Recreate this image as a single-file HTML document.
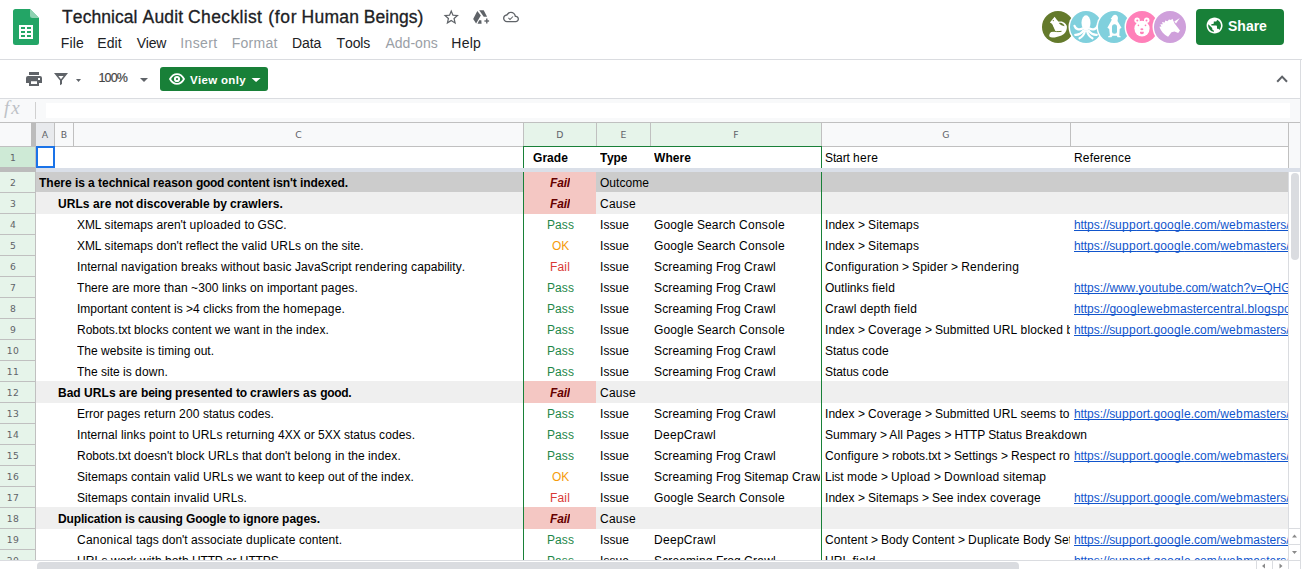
<!DOCTYPE html>
<html><head><meta charset="utf-8"><title>Technical Audit Checklist (for Human Beings)</title>
<style>
*{box-sizing:border-box;margin:0;padding:0}
html,body{width:1302px;height:569px;overflow:hidden;background:#fff;font-family:"Liberation Sans",Arial,sans-serif;color:#000;font-kerning:none}
#app{position:relative;width:1302px;height:569px;overflow:hidden}
.abs{position:absolute}
/* top bar */
#title{position:absolute;left:0;top:5px;-webkit-text-stroke:0.3px #202124;font-size:17.5px;line-height:24px;color:#202124;white-space:pre}
#title span{position:absolute;top:0}
#menu{position:absolute;left:0;top:33px;font-size:14px;line-height:20px;color:#202124;white-space:nowrap}
#menu span{position:absolute;top:0}
#menu .dis{color:#9aa0a6}
#tb-line{position:absolute;left:0;top:59px;width:1302px;height:1px;background:#dadce0}
#fxbar{position:absolute;left:0;top:98px;width:1300px;height:24px;background:#f8f9fa;border-top:1px solid #dadce0}
#fxbox{position:absolute;left:46px;top:103px;width:1244px;height:15px;background:#fff}
#fx{position:absolute;left:4px;top:96.500px;font-family:"Liberation Serif",serif;font-style:italic;font-size:19px;line-height:22px;color:#bdc1c6;letter-spacing:2px}
#fx-sep{position:absolute;left:35px;top:102px;width:1px;height:17px;background:#d0d0d0}
#rline{position:absolute;left:1300px;top:60px;width:1px;height:509px;background:#dadce0}
#zoom{position:absolute;left:98.500px;top:68.500px;font-size:12.500px;line-height:18px;color:#444;letter-spacing:-0.850px;-webkit-text-stroke:0.2px #444}
#viewonly{position:absolute;left:160px;top:67px;width:108px;height:24px;border-radius:3px;background:#188038;color:#fff;font-size:11.5px;font-weight:bold;line-height:24px;letter-spacing:0.32px}
#viewonly span{position:absolute;left:30px;top:0.5px;white-space:nowrap}
#share{position:absolute;left:1196px;top:9px;width:88px;height:36px;border-radius:4px;background:#188038;color:#fff;font-size:14px;font-weight:bold;line-height:36px}
#share span{position:absolute;left:32px;top:-1px}
/* grid */
#colhdr{position:absolute;left:0;top:122px;width:1300px;height:25px;background:#f8f9fa;border-top:1px solid #c0c0c0;border-bottom:1px solid #c0c0c0}
.ch{position:absolute;top:123px;height:23px;font-family:"DejaVu Sans","Liberation Sans",sans-serif;font-size:9.300px;letter-spacing:0.2px;line-height:24.400px;text-align:center;color:#5f6368;border-right:1px solid #c0c0c0}
.ch.sel{background:#e6f4ea}
.ch.act{background:#e8eaed}
.r{position:absolute;left:0;width:1288px;height:21px}
.r.l0:before{content:"";position:absolute;left:36px;top:0;width:1252px;height:20px;background:#ccc}
.r.l1:before{content:"";position:absolute;left:36px;top:-1px;width:1252px;height:22px;background:#efefef}
.rh{position:absolute;left:0;top:0;width:36px;height:21px;background:#e6f4ea;border-right:1px solid #c0c0c0;border-bottom:1px solid #c0c0c0;font-family:"DejaVu Sans","Liberation Sans",sans-serif;font-size:9.200px;letter-spacing:0.300px;line-height:22.600px;color:#5f6368;text-align:center;padding-right:9px;overflow:hidden}
.c{position:absolute;top:0;height:21px;font-size:12px;line-height:23px;white-space:pre;overflow:hidden;color:#000}
.c.b{font-weight:bold}
.fbg{position:absolute;left:524px;top:0;width:72px;height:21px;background:#f4c7c3}
.l1 .fbg{top:-1px;height:22px}
.l0 .fbg{height:20px}
.c.fb{color:#660000;font-weight:bold;font-style:italic}
.gpass{color:#1e8749}
.gok{color:#f59c0c}
.gfail{color:#d93a35}
.wh{left:654px;width:166px}
.st{left:825px;width:245px}
.rf{left:1074px;width:214px;color:#1155cc}
.rf u{text-decoration:underline;text-decoration-skip-ink:none}
#selL,#selR,#selT{position:absolute;background:#188038}
</style></head><body><div id="app">

<!-- logo -->
<svg class="abs" style="left:13px;top:9px" width="26" height="36" viewBox="0 0 26 36">
<path d="M2.5 0H17L26 9V33.5A2.5 2.5 0 0 1 23.5 36H2.5A2.5 2.5 0 0 1 0 33.500V2.5A2.5 2.5 0 0 1 2.5 0Z" fill="#23a566"/>
<path d="M17 0L26 9H19.500A2.5 2.5 0 0 1 17 6.500Z" fill="#8ed1b1"/>
<path d="M6 16H20V30H6ZM8 18V20H12V18ZM14 18V20H18V18ZM8 22V24H12V22ZM14 22V24H18V22ZM8 26V28H12V26ZM14 26V28H18V26Z" fill="#fff" fill-rule="evenodd"/>
</svg>
<div id="title"><span style="left:62.1px;letter-spacing:0.06px">Technical</span><span style="left:142.6px;letter-spacing:0.15px">Audit</span><span style="left:188.1px;letter-spacing:0.36px">Checklist</span><span style="left:268.3px;letter-spacing:0.68px">(for</span><span style="left:301.5px;letter-spacing:0.29px">Human</span><span style="left:363.7px;letter-spacing:0.07px">Beings)</span></div>
<div id="menu"><span style="left:60.8px;letter-spacing:0.13px">File</span><span style="left:97.3px;letter-spacing:0.08px">Edit</span><span style="left:136.7px;letter-spacing:-0.23px">View</span><span class="dis" style="left:180.2px;letter-spacing:0.41px">Insert</span><span class="dis" style="left:231.7px;letter-spacing:0.27px">Format</span><span style="left:292.1px;letter-spacing:-0.13px">Data</span><span style="left:336.5px;letter-spacing:-0.10px">Tools</span><span class="dis" style="left:385.4px;letter-spacing:0.04px">Add-ons</span><span style="left:451.3px;letter-spacing:0.24px">Help</span></div>


<div id="share"><span>Share</span></div>
<div id="viewonly"><span>View only</span></div>
<!-- title icons -->
<svg class="abs" style="left:441.8px;top:8px" width="18.5" height="18.5" viewBox="0 0 24 24"><path fill="#5f6368" d="M22 9.240l-7.190-.62L12 2 9.190 8.630 2 9.240l5.460 4.730L5.820 21 12 17.270 18.180 21l-1.630-7.030L22 9.240zM12 15.400l-3.760 2.270 1-4.280-3.320-2.880 4.380-.38L12 6.100l1.710 4.040 4.380.38-3.320 2.880 1 4.280L12 15.400z"/></svg>
<svg class="abs" style="left:470px;top:6px" width="22" height="22" viewBox="470 6 22 22"><g fill="#5f6368"><path d="M477.300 10.900L480.800 15.400L476.100 23.400L473.200 18.900Z"/><path d="M479.200 10.200H483.700L487.100 16.800H483.700Z"/><path d="M477.500 23.700L479.200 20.200H481.300L481.600 23.700Z"/><path d="M484.400 20.300H489.100V21.700H484.400Z"/><path d="M486.100 18.500H487.500V23.500H486.100Z"/></g></svg>
<svg class="abs" style="left:502.900px;top:8.900px" width="16" height="16" viewBox="0 0 24 24"><path fill="#5f6368" d="M19.350 10.040C18.670 6.590 15.640 4 12 4 9.110 4 6.600 5.640 5.350 8.040 2.340 8.360 0 10.910 0 14c0 3.310 2.690 6 6 6h13c2.760 0 5-2.240 5-5 0-2.640-2.050-4.780-4.650-4.960zM19 18H6c-2.210 0-4-1.790-4-4 0-2.050 1.530-3.760 3.560-3.970l1.070-.11.500-.95C8.080 7.140 9.940 6 12 6c2.620 0 4.880 1.860 5.390 4.430l.3 1.500 1.530.11c1.560.1 2.780 1.410 2.780 2.960 0 1.650-1.350 3-3 3zm-8.500-3.200l-1.900-1.900-1 1 2.900 2.900 5-5-1-1z"/></svg>
<!-- toolbar icons -->
<svg class="abs" style="left:20px;top:64px" width="140" height="30" viewBox="20 64 140 30"><g fill="#5f6368"><rect x="29" y="72" width="10" height="3"/><path d="M28 76H40A2 2 0 0 1 42 78V83H39V80H29V83H26V78A2 2 0 0 1 28 76ZM38 78V80H40V78Z" fill-rule="evenodd"/><path d="M29 80H39V86H29ZM31 81.200V84H37V81.200Z" fill-rule="evenodd"/><path d="M54 73H68L62 80.500V84L60 85.200V80.500ZM58.400 75.900L61 79.200L63.600 75.900Z" fill-rule="evenodd"/><path d="M76 79H81L78.500 82Z"/><path d="M140 78H148L144 82Z"/></g></svg>
<!-- eye + caret in view only -->
<svg class="abs" style="left:160px;top:67px" width="108" height="24" viewBox="160 67 108 24"><path d="M170 79C172 75.400 174.500 74.100 177 74.100C179.500 74.100 182 75.400 184 79C182 82.600 179.500 83.900 177 83.900C174.500 83.900 172 82.600 170 79Z" fill="none" stroke="#fff" stroke-width="1.800" stroke-linejoin="round"/><circle cx="177" cy="79" r="2.100" fill="none" stroke="#fff" stroke-width="2"/><path d="M251.600 78H260.600L256.100 82Z" fill="#fff"/></svg>
<!-- chevron -->
<svg class="abs" style="left:1274px;top:72px" width="16" height="14" viewBox="1274 72 16 14"><path d="M1277.200 81.800L1282.100 76.600L1287 81.800" fill="none" stroke="#5f6368" stroke-width="2"/></svg>
<!-- globe -->
<svg class="abs" style="left:1205.400px;top:16.400px" width="19.200" height="19.200" viewBox="0 0 24 24"><path fill="#fff" d="M12 2C6.480 2 2 6.480 2 12s4.480 10 10 10 10-4.480 10-10S17.520 2 12 2zm-1 17.930c-3.950-.49-7-3.850-7-7.930 0-.62.080-1.210.21-1.790L9 15v1c0 1.100.9 2 2 2v1.930zm6.900-2.540c-.26-.81-1-1.390-1.900-1.390h-1v-3c0-.55-.45-1-1-1H8v-2h2c.55 0 1-.45 1-1V7h2c1.100 0 2-.9 2-2v-.41c2.930 1.190 5 4.060 5 7.410 0 2.080-.8 3.970-2.100 5.390z"/></svg>
<!-- avatars -->
<svg class="abs" style="left:1040px;top:9px" width="148" height="36" viewBox="-2 -2 148 36">
<g><circle cx="16" cy="16" r="16" fill="#647a2c"/><path fill="#fff" d="M7.900 11.400L12.600 5.700L15 8.900L16.700 10.700C19 10 21.500 10.800 22.700 12C24.500 13.500 25.300 15 24.800 17.500C24.300 20 23.500 21.200 23 21.700C21.500 23.500 20 24.300 18 25C15.500 26 12.500 26.700 10.400 26.500C8 26.400 6.800 25.500 7.300 24C7.600 22.800 7.800 22.200 8.300 21.700C9.500 20.800 11.500 20.600 13.200 20.300L12 17L10.400 13.700L9.300 12.300Z"/><path fill="#647a2c" d="M16.800 12.100C18.800 11.200 21.800 12.400 22.600 15.200C20.500 15 18.200 14 16.800 12.100Z"/><path d="M10.300 19.700C13 20.600 16 20.900 19.500 20.300" fill="none" stroke="#647a2c" stroke-width="1"/><path fill="#647a2c" d="M7 12.500L10 13L11.500 17.500L13 19.500L8 21Z"/><circle cx="11.300" cy="9.600" r=".6" fill="#647a2c"/></g>
<g transform="translate(28 0)"><circle cx="16" cy="16" r="17.500" fill="#fff"/><circle cx="16" cy="16" r="16" fill="#80d0dd"/><ellipse cx="16" cy="11.800" rx="4.500" ry="7.600" fill="#fff"/><g fill="none" stroke="#fff" stroke-width="2.200" stroke-linecap="round"><path d="M12.500 17.500C9 19.500 5.500 18 4.500 14.800"/><path d="M19.500 17.500C23 19.500 26.500 18 27.500 14.800"/><path d="M13.500 19.500C11 23 8 24 5.200 23.800"/><path d="M18.500 19.500C21 23 24 24 26.800 23.800"/><path d="M15 20C14 24 12 26 9.500 27.300"/><path d="M17 20C18 24 20 26 22.500 27.300"/></g></g>
<g transform="translate(56 0)"><circle cx="16" cy="16" r="17.500" fill="#fff"/><circle cx="16" cy="16" r="16" fill="#80d0dd"/><path fill="#fff" d="M12.600 7.800L14 6.300C14.500 4.500 16 3.600 17.300 3.800C19.300 4.200 20.200 6 19.900 7.800C19.800 8.800 19.600 9.300 19.500 10L23.500 16.800L21.700 17.900L21.300 24.400L22.700 25.400V26.200H19.500L18.800 24.800H14.500L13.400 26.200H10.100V25.400L11.900 24.400L11.200 17.900L9.400 16.800L13.400 9.600L13.700 8.300Z"/><rect x="14" y="13.200" width="5" height="9.500" rx="2.500" fill="#80d0dd"/></g>
<g transform="translate(84 0)"><circle cx="16" cy="16" r="17.500" fill="#fff"/><circle cx="16" cy="16" r="16" fill="#ff80b9"/><circle cx="11.100" cy="9.300" r="2.700" fill="#fff"/><circle cx="20.700" cy="9.300" r="2.700" fill="#fff"/><ellipse cx="16" cy="17.600" rx="7.600" ry="7.900" fill="#fff"/><g fill="#ff80b9"><circle cx="11.300" cy="9.500" r="1"/><circle cx="20.500" cy="9.500" r="1"/><circle cx="12.400" cy="14.400" r=".8"/><circle cx="19.500" cy="14.400" r=".8"/><ellipse cx="15.900" cy="18.300" rx="1.500" ry="1"/><path d="M14 20.800H17.800V22C17.800 23.500 14 23.500 14 22Z"/></g></g>
<g transform="translate(112 0)"><circle cx="16" cy="16" r="17.500" fill="#fff"/><circle cx="16" cy="16" r="16" fill="#cfa0db"/><path fill="#fff" d="M25.800 6.900L22 12.600L20.300 10.500ZM18.400 7.800L20.600 12.500L26 19.400L24.200 21.900L20.500 20.500L17.500 21.200L14.100 25.800C10 24 7 20 5.400 15.700L7.500 15.500L6.200 13.200L8.800 13.200L8 11L10.800 11.500L11.200 9.500L13.500 10.200L15 8.500L17 9Z"/></g>
</svg>
<div id="tb-line"></div>
<div id="zoom">100%</div>
<div id="fxbar"></div><div id="fxbox"></div>
<div id="fx">fx</div>
<div id="fx-sep"></div>
<div id="rline"></div>

<div id="colhdr"></div>
<div class="abs" style="left:31px;top:123px;width:5px;height:23px;background:#bcbcbc"></div>
<div class="ch act" style="left:36px;width:19px">A</div>
<div class="ch" style="left:55px;width:19px">B</div>
<div class="ch" style="left:74px;width:450px">C</div>
<div class="ch sel" style="left:524px;width:73px">D</div>
<div class="ch sel" style="left:597px;width:54px">E</div>
<div class="ch sel" style="left:651px;width:171px">F</div>
<div class="ch" style="left:822px;width:249px">G</div>
<div class="ch" style="left:1071px;width:218px"></div>

<!-- row 1 -->
<div class="r" style="top:147px">
<div class="rh" style="background:#ceead6">1</div>
<div class="c b" style="left:533px"><span style="letter-spacing:0.06px">Grade</span></div>
<div class="c b" style="left:600px"><span style="letter-spacing:-0.22px">Type</span></div>
<div class="c b" style="left:654px"><span style="letter-spacing:0.07px">Where</span></div>
<div class="c" style="left:825px"><span style="letter-spacing:-0.11px">Start </span><span style="letter-spacing:0.25px">here</span></div>
<div class="c" style="left:1074px"><span style="letter-spacing:0.18px">Reference</span></div>
</div>
<!-- freeze bar -->
<div class="abs" style="left:36px;top:168px;width:1264px;height:4px;background:#dadfe8"></div>
<div class="abs" style="left:0;top:167px;width:36px;height:5px;background:#bcbcbc"></div>
<div class="r l0" style="top:172px">
<div class="rh">2</div>
<div class="c b" style="left:39px;width:484px">There <span style="letter-spacing:-0.11px">is </span>a <span style="letter-spacing:-0.04px">technical </span><span style="letter-spacing:0.04px">reason </span><span style="letter-spacing:-0.33px">good </span><span style="letter-spacing:-0.08px">content </span><span style="letter-spacing:-0.09px">isn't </span><span style="letter-spacing:-0.08px">indexed.</span></div>
<div class="fbg"></div><div class="c fb" style="left:550px"><span style="letter-spacing:-0.17px">Fail</span></div>
<div class="c" style="left:600px"><span style="letter-spacing:0.04px">Outcome</span></div>
</div>
<div class="r l1" style="top:193px">
<div class="rh">3</div>
<div class="c b" style="left:58px;width:465px"><span style="letter-spacing:0.07px">URLs </span><span style="letter-spacing:0.16px">are </span><span style="letter-spacing:-0.25px">not </span><span style="letter-spacing:0.02px">discoverable </span><span style="letter-spacing:-0.11px">by </span><span style="letter-spacing:0.11px">crawlers.</span></div>
<div class="fbg"></div><div class="c fb" style="left:550px"><span style="letter-spacing:-0.17px">Fail</span></div>
<div class="c" style="left:600px"><span style="letter-spacing:0.26px">Cause</span></div>
</div>
<div class="r" style="top:214px">
<div class="rh">4</div>
<div class="c" style="left:77px;width:446px"><span style="letter-spacing:-0.11px">XML </span><span style="letter-spacing:0.07px">sitemaps </span>aren't <span style="letter-spacing:0.25px">uploaded </span><span style="letter-spacing:-0.11px">to </span><span style="letter-spacing:-0.08px">GSC.</span></div>
<div class="c gpass" style="left:547px"><span style="letter-spacing:0.08px">Pass</span></div>
<div class="c" style="left:600px"><span style="letter-spacing:0.06px">Issue</span></div>
<div class="c wh"><span style="letter-spacing:0.14px">Google </span><span style="letter-spacing:0.09px">Search </span><span style="letter-spacing:0.28px">Console</span></div>
<div class="c st"><span style="letter-spacing:0.05px">Index </span><span style="letter-spacing:-0.17px">&gt; </span><span style="letter-spacing:0.12px">Sitemaps</span></div>
<div class="c rf"><u><span style="letter-spacing:-0.11px">htt</span>ps:<span style="letter-spacing:-0.22px">//s</span><span style="letter-spacing:0.33px">upp</span>ort<span style="letter-spacing:0.11px">.go</span><span style="letter-spacing:0.33px">ogl</span>e.com/<span style="letter-spacing:0.33px">web</span><span style="letter-spacing:0.11px">mas</span>ters/a<span style="letter-spacing:0.22px">nsw</span>er/<span style="letter-spacing:0.33px">183</span><span style="letter-spacing:0.33px">668</span></u></div>
</div>
<div class="r" style="top:235px">
<div class="rh">5</div>
<div class="c" style="left:77px;width:446px"><span style="letter-spacing:-0.11px">XML </span><span style="letter-spacing:0.07px">sitemaps </span>don't reflect the <span style="letter-spacing:0.16px">valid </span><span style="letter-spacing:0.13px">URLs </span><span style="letter-spacing:0.11px">on </span>the site.</div>
<div class="c gok" style="left:552px"><span style="letter-spacing:-0.17px">OK</span></div>
<div class="c" style="left:600px"><span style="letter-spacing:0.06px">Issue</span></div>
<div class="c wh"><span style="letter-spacing:0.14px">Google </span><span style="letter-spacing:0.09px">Search </span><span style="letter-spacing:0.28px">Console</span></div>
<div class="c st"><span style="letter-spacing:0.05px">Index </span><span style="letter-spacing:-0.17px">&gt; </span><span style="letter-spacing:0.12px">Sitemaps</span></div>
<div class="c rf"><u><span style="letter-spacing:-0.11px">htt</span>ps:<span style="letter-spacing:-0.22px">//s</span><span style="letter-spacing:0.33px">upp</span>ort<span style="letter-spacing:0.11px">.go</span><span style="letter-spacing:0.33px">ogl</span>e.com/<span style="letter-spacing:0.33px">web</span><span style="letter-spacing:0.11px">mas</span>ters/a<span style="letter-spacing:0.22px">nsw</span>er/<span style="letter-spacing:0.33px">183</span><span style="letter-spacing:0.33px">668</span></u></div>
</div>
<div class="r" style="top:256px">
<div class="rh">6</div>
<div class="c" style="left:77px;width:446px"><span style="letter-spacing:0.07px">Internal </span><span style="letter-spacing:0.18px">navigation </span><span style="letter-spacing:0.09px">breaks </span><span style="letter-spacing:0.08px">without </span><span style="letter-spacing:0.11px">basic </span><span style="letter-spacing:0.06px">JavaScript </span><span style="letter-spacing:0.20px">rendering </span><span style="letter-spacing:0.07px">capability.</span></div>
<div class="c gfail" style="left:550px"><span style="letter-spacing:0.17px">Fail</span></div>
<div class="c" style="left:600px"><span style="letter-spacing:0.06px">Issue</span></div>
<div class="c wh"><span style="letter-spacing:0.13px">Screaming </span>Frog <span style="letter-spacing:0.27px">Crawl</span></div>
<div class="c st" style="width:462px"><span style="letter-spacing:0.33px">Con</span><span style="letter-spacing:0.11px">fig</span><span style="letter-spacing:0.22px">ura</span><span style="letter-spacing:0.11px">tio</span>n <span style="letter-spacing:-0.17px">&gt; </span><span style="letter-spacing:0.14px">Spider </span><span style="letter-spacing:-0.17px">&gt; </span><span style="letter-spacing:0.29px">Rendering</span></div>
</div>
<div class="r" style="top:277px">
<div class="rh">7</div>
<div class="c" style="left:77px;width:446px"><span style="letter-spacing:0.05px">There </span><span style="letter-spacing:0.08px">are </span><span style="letter-spacing:0.07px">more </span><span style="letter-spacing:0.06px">than </span><span style="letter-spacing:0.13px">~300 </span><span style="letter-spacing:0.11px">links </span><span style="letter-spacing:0.11px">on </span><span style="letter-spacing:0.06px">important </span><span style="letter-spacing:0.16px">pages.</span></div>
<div class="c gpass" style="left:547px"><span style="letter-spacing:0.08px">Pass</span></div>
<div class="c" style="left:600px"><span style="letter-spacing:0.06px">Issue</span></div>
<div class="c wh"><span style="letter-spacing:0.13px">Screaming </span>Frog <span style="letter-spacing:0.27px">Crawl</span></div>
<div class="c st"><span style="letter-spacing:0.04px">Outlinks </span><span style="letter-spacing:0.20px">field</span></div>
<div class="c rf"><u><span style="letter-spacing:-0.11px">htt</span>ps:<span style="letter-spacing:-0.11px">//w</span><span style="letter-spacing:-0.11px">ww.</span><span style="letter-spacing:0.22px">you</span><span style="letter-spacing:0.11px">tub</span>e.com/<span style="letter-spacing:0.11px">wat</span><span style="letter-spacing:0.22px">ch?</span><span style="letter-spacing:-0.11px">v=Q</span><span style="letter-spacing:0.11px">HGh</span>sdf<span style="letter-spacing:0.16px">sd</span></u></div>
</div>
<div class="r" style="top:298px">
<div class="rh">8</div>
<div class="c" style="left:77px;width:446px">Important <span style="letter-spacing:0.04px">content </span>is <span style="letter-spacing:-0.01px">&gt;4 </span><span style="letter-spacing:0.05px">clicks </span><span style="letter-spacing:-0.07px">from </span>the <span style="letter-spacing:0.22px">homepage.</span></div>
<div class="c gpass" style="left:547px"><span style="letter-spacing:0.08px">Pass</span></div>
<div class="c" style="left:600px"><span style="letter-spacing:0.06px">Issue</span></div>
<div class="c wh"><span style="letter-spacing:0.13px">Screaming </span>Frog <span style="letter-spacing:0.27px">Crawl</span></div>
<div class="c st"><span style="letter-spacing:0.17px">Crawl </span><span style="letter-spacing:0.11px">depth </span><span style="letter-spacing:0.20px">field</span></div>
<div class="c rf"><u><span style="letter-spacing:-0.11px">htt</span>ps:<span style="letter-spacing:-0.11px">//g</span><span style="letter-spacing:0.33px">oog</span><span style="letter-spacing:0.33px">lew</span><span style="letter-spacing:0.22px">ebm</span>ast<span style="letter-spacing:0.11px">erc</span><span style="letter-spacing:0.11px">ent</span><span style="letter-spacing:0.22px">ral</span><span style="letter-spacing:0.11px">.bl</span><span style="letter-spacing:0.22px">ogs</span><span style="letter-spacing:0.11px">pot</span>.com/2<span style="letter-spacing:0.33px">008</span><span style="letter-spacing:0.11px">/10</span></u></div>
</div>
<div class="r" style="top:319px">
<div class="rh">9</div>
<div class="c" style="left:77px;width:446px"><span style="letter-spacing:-0.03px">Robots.txt </span><span style="letter-spacing:0.09px">blocks </span><span style="letter-spacing:0.04px">content </span><span style="letter-spacing:0.11px">we </span><span style="letter-spacing:0.06px">want </span><span style="letter-spacing:0.11px">in </span>the <span style="letter-spacing:0.16px">index.</span></div>
<div class="c gpass" style="left:547px"><span style="letter-spacing:0.08px">Pass</span></div>
<div class="c" style="left:600px"><span style="letter-spacing:0.06px">Issue</span></div>
<div class="c wh"><span style="letter-spacing:0.14px">Google </span><span style="letter-spacing:0.09px">Search </span><span style="letter-spacing:0.28px">Console</span></div>
<div class="c st"><span style="letter-spacing:0.05px">Index </span><span style="letter-spacing:-0.17px">&gt; </span><span style="letter-spacing:0.18px">Coverage </span><span style="letter-spacing:-0.17px">&gt; </span><span style="letter-spacing:0.06px">Submitted </span><span style="letter-spacing:0.05px">URL </span><span style="letter-spacing:0.16px">blocked </span>by <span style="letter-spacing:-0.04px">robots.txt</span></div>
<div class="c rf"><u><span style="letter-spacing:-0.11px">htt</span>ps:<span style="letter-spacing:-0.22px">//s</span><span style="letter-spacing:0.33px">upp</span>ort<span style="letter-spacing:0.11px">.go</span><span style="letter-spacing:0.33px">ogl</span>e.com/<span style="letter-spacing:0.33px">web</span><span style="letter-spacing:0.11px">mas</span>ters/a<span style="letter-spacing:0.22px">nsw</span>er/<span style="letter-spacing:0.33px">744</span><span style="letter-spacing:0.33px">020</span><span style="letter-spacing:0.33px">3</span></u></div>
</div>
<div class="r" style="top:340px">
<div class="rh">10</div>
<div class="c" style="left:77px;width:446px">The <span style="letter-spacing:0.12px">website </span>is <span style="letter-spacing:0.09px">timing </span>out.</div>
<div class="c gpass" style="left:547px"><span style="letter-spacing:0.08px">Pass</span></div>
<div class="c" style="left:600px"><span style="letter-spacing:0.06px">Issue</span></div>
<div class="c wh"><span style="letter-spacing:0.13px">Screaming </span>Frog <span style="letter-spacing:0.27px">Crawl</span></div>
<div class="c st" style="width:462px"><span style="letter-spacing:-0.05px">Status </span><span style="letter-spacing:0.24px">code</span></div>
</div>
<div class="r" style="top:361px">
<div class="rh">11</div>
<div class="c" style="left:77px;width:446px">The site is <span style="letter-spacing:0.20px">down.</span></div>
<div class="c gpass" style="left:547px"><span style="letter-spacing:0.08px">Pass</span></div>
<div class="c" style="left:600px"><span style="letter-spacing:0.06px">Issue</span></div>
<div class="c wh"><span style="letter-spacing:0.13px">Screaming </span>Frog <span style="letter-spacing:0.27px">Crawl</span></div>
<div class="c st" style="width:462px"><span style="letter-spacing:-0.05px">Status </span><span style="letter-spacing:0.24px">code</span></div>
</div>
<div class="r l1" style="top:382px">
<div class="rh">12</div>
<div class="c b" style="left:58px;width:465px">Bad <span style="letter-spacing:0.07px">URLs </span><span style="letter-spacing:0.16px">are </span><span style="letter-spacing:-0.22px">being </span><span style="letter-spacing:0.03px">presented </span><span style="letter-spacing:-0.22px">to </span><span style="letter-spacing:0.11px">crawlers </span><span style="letter-spacing:0.11px">as </span><span style="letter-spacing:-0.33px">good.</span></div>
<div class="fbg"></div><div class="c fb" style="left:550px"><span style="letter-spacing:-0.17px">Fail</span></div>
<div class="c" style="left:600px"><span style="letter-spacing:0.26px">Cause</span></div>
</div>
<div class="r" style="top:403px">
<div class="rh">13</div>
<div class="c" style="left:77px;width:446px">Error <span style="letter-spacing:0.16px">pages </span><span style="letter-spacing:0.05px">return </span><span style="letter-spacing:0.16px">200 </span><span style="letter-spacing:-0.05px">status </span><span style="letter-spacing:0.11px">codes.</span></div>
<div class="c gpass" style="left:547px"><span style="letter-spacing:0.08px">Pass</span></div>
<div class="c" style="left:600px"><span style="letter-spacing:0.06px">Issue</span></div>
<div class="c wh"><span style="letter-spacing:0.13px">Screaming </span>Frog <span style="letter-spacing:0.27px">Crawl</span></div>
<div class="c st"><span style="letter-spacing:0.05px">Index </span><span style="letter-spacing:-0.17px">&gt; </span><span style="letter-spacing:0.18px">Coverage </span><span style="letter-spacing:-0.17px">&gt; </span><span style="letter-spacing:0.06px">Submitted </span><span style="letter-spacing:0.05px">URL </span><span style="letter-spacing:0.05px">seems </span><span style="letter-spacing:-0.11px">to </span><span style="letter-spacing:0.11px">be </span>a <span style="letter-spacing:-0.14px">Soft </span><span style="letter-spacing:0.33px">404</span></div>
<div class="c rf"><u><span style="letter-spacing:-0.11px">htt</span>ps:<span style="letter-spacing:-0.22px">//s</span><span style="letter-spacing:0.33px">upp</span>ort<span style="letter-spacing:0.11px">.go</span><span style="letter-spacing:0.33px">ogl</span>e.com/<span style="letter-spacing:0.33px">web</span><span style="letter-spacing:0.11px">mas</span>ters/a<span style="letter-spacing:0.22px">nsw</span>er/<span style="letter-spacing:0.33px">744</span><span style="letter-spacing:0.33px">020</span><span style="letter-spacing:0.33px">3</span></u></div>
</div>
<div class="r" style="top:424px">
<div class="rh">14</div>
<div class="c" style="left:77px;width:446px"><span style="letter-spacing:0.07px">Internal </span><span style="letter-spacing:0.11px">links </span><span style="letter-spacing:0.11px">point </span><span style="letter-spacing:-0.11px">to </span><span style="letter-spacing:0.13px">URLs </span><span style="letter-spacing:0.13px">returning </span>4XX or 5XX <span style="letter-spacing:-0.05px">status </span><span style="letter-spacing:0.11px">codes.</span></div>
<div class="c gpass" style="left:547px"><span style="letter-spacing:0.08px">Pass</span></div>
<div class="c" style="left:600px"><span style="letter-spacing:0.06px">Issue</span></div>
<div class="c wh"><span style="letter-spacing:0.29px">DeepCrawl</span></div>
<div class="c st" style="width:462px"><span style="letter-spacing:0.04px">Summary </span><span style="letter-spacing:-0.50px">&gt; </span><span style="letter-spacing:0.08px">All </span><span style="letter-spacing:0.11px">Pages </span><span style="letter-spacing:-0.17px">&gt; </span><span style="letter-spacing:-0.18px">HTTP </span><span style="letter-spacing:-0.05px">Status </span><span style="letter-spacing:0.22px">Breakdown</span></div>
</div>
<div class="r" style="top:445px">
<div class="rh">15</div>
<div class="c" style="left:77px;width:446px"><span style="letter-spacing:-0.03px">Robots.txt </span><span style="letter-spacing:0.04px">doesn't </span><span style="letter-spacing:0.11px">block </span><span style="letter-spacing:0.13px">URLs </span><span style="letter-spacing:-0.07px">that </span>don't <span style="letter-spacing:0.23px">belong </span><span style="letter-spacing:0.11px">in </span>the <span style="letter-spacing:0.16px">index.</span></div>
<div class="c gpass" style="left:547px"><span style="letter-spacing:0.08px">Pass</span></div>
<div class="c" style="left:600px"><span style="letter-spacing:0.06px">Issue</span></div>
<div class="c wh"><span style="letter-spacing:0.13px">Screaming </span>Frog <span style="letter-spacing:0.27px">Crawl</span></div>
<div class="c st"><span style="letter-spacing:0.16px">Configure </span><span style="letter-spacing:-0.17px">&gt; </span><span style="letter-spacing:-0.06px">robots.txt </span><span style="letter-spacing:-0.17px">&gt; </span><span style="letter-spacing:0.03px">Settings </span><span style="letter-spacing:-0.17px">&gt; </span><span style="letter-spacing:0.08px">Respect </span><span style="letter-spacing:-0.04px">robots.txt</span></div>
<div class="c rf"><u><span style="letter-spacing:-0.11px">htt</span>ps:<span style="letter-spacing:-0.22px">//s</span><span style="letter-spacing:0.33px">upp</span>ort<span style="letter-spacing:0.11px">.go</span><span style="letter-spacing:0.33px">ogl</span>e.com/<span style="letter-spacing:0.33px">web</span><span style="letter-spacing:0.11px">mas</span>ters/a<span style="letter-spacing:0.22px">nsw</span>er/<span style="letter-spacing:0.33px">606</span><span style="letter-spacing:0.33px">260</span><span style="letter-spacing:0.33px">8</span></u></div>
</div>
<div class="r" style="top:466px">
<div class="rh">16</div>
<div class="c" style="left:77px;width:446px"><span style="letter-spacing:0.07px">Sitemaps </span><span style="letter-spacing:0.12px">contain </span><span style="letter-spacing:0.16px">valid </span><span style="letter-spacing:0.13px">URLs </span><span style="letter-spacing:0.11px">we </span><span style="letter-spacing:0.06px">want </span><span style="letter-spacing:-0.11px">to </span><span style="letter-spacing:0.13px">keep </span>out <span style="letter-spacing:-0.11px">of </span>the <span style="letter-spacing:0.16px">index.</span></div>
<div class="c gok" style="left:552px"><span style="letter-spacing:-0.17px">OK</span></div>
<div class="c" style="left:600px"><span style="letter-spacing:0.06px">Issue</span></div>
<div class="c wh"><span style="letter-spacing:0.13px">Screaming </span>Frog <span style="letter-spacing:0.08px">Sitemap </span><span style="letter-spacing:0.27px">Crawl</span></div>
<div class="c st" style="width:462px">List <span style="letter-spacing:0.13px">mode </span><span style="letter-spacing:-0.17px">&gt; </span><span style="letter-spacing:0.23px">Upload </span><span style="letter-spacing:-0.17px">&gt; </span><span style="letter-spacing:0.26px">Download </span><span style="letter-spacing:0.14px">sitemap</span></div>
</div>
<div class="r" style="top:487px">
<div class="rh">17</div>
<div class="c" style="left:77px;width:446px"><span style="letter-spacing:0.07px">Sitemaps </span><span style="letter-spacing:0.12px">contain </span><span style="letter-spacing:0.21px">invalid </span><span style="letter-spacing:0.13px">URLs.</span></div>
<div class="c gfail" style="left:550px"><span style="letter-spacing:0.17px">Fail</span></div>
<div class="c" style="left:600px"><span style="letter-spacing:0.06px">Issue</span></div>
<div class="c wh"><span style="letter-spacing:0.14px">Google </span><span style="letter-spacing:0.09px">Search </span><span style="letter-spacing:0.28px">Console</span></div>
<div class="c st"><span style="letter-spacing:0.05px">Index </span><span style="letter-spacing:-0.17px">&gt; </span><span style="letter-spacing:0.07px">Sitemaps </span><span style="letter-spacing:-0.17px">&gt; </span><span style="letter-spacing:0.08px">See </span><span style="letter-spacing:0.16px">index </span><span style="letter-spacing:0.20px">coverage</span></div>
<div class="c rf"><u><span style="letter-spacing:-0.11px">htt</span>ps:<span style="letter-spacing:-0.22px">//s</span><span style="letter-spacing:0.33px">upp</span>ort<span style="letter-spacing:0.11px">.go</span><span style="letter-spacing:0.33px">ogl</span>e.com/<span style="letter-spacing:0.33px">web</span><span style="letter-spacing:0.11px">mas</span>ters/a<span style="letter-spacing:0.22px">nsw</span>er/<span style="letter-spacing:0.33px">745</span><span style="letter-spacing:0.33px">100</span><span style="letter-spacing:0.33px">1</span></u></div>
</div>
<div class="r l1" style="top:508px">
<div class="rh">18</div>
<div class="c b" style="left:58px;width:465px"><span style="letter-spacing:-0.14px">Duplication </span><span style="letter-spacing:-0.11px">is </span><span style="letter-spacing:-0.08px">causing </span><span style="letter-spacing:-0.24px">Google </span><span style="letter-spacing:-0.22px">to </span><span style="letter-spacing:-0.14px">ignore </span>pages.</div>
<div class="fbg"></div><div class="c fb" style="left:550px"><span style="letter-spacing:-0.17px">Fail</span></div>
<div class="c" style="left:600px"><span style="letter-spacing:0.26px">Cause</span></div>
</div>
<div class="r" style="top:529px">
<div class="rh">19</div>
<div class="c" style="left:77px;width:446px"><span style="letter-spacing:0.23px">Canonical </span>tags don't <span style="letter-spacing:0.10px">associate </span><span style="letter-spacing:0.16px">duplicate </span><span style="letter-spacing:0.04px">content.</span></div>
<div class="c gpass" style="left:547px"><span style="letter-spacing:0.08px">Pass</span></div>
<div class="c" style="left:600px"><span style="letter-spacing:0.06px">Issue</span></div>
<div class="c wh"><span style="letter-spacing:0.29px">DeepCrawl</span></div>
<div class="c st"><span style="letter-spacing:0.08px">Content </span><span style="letter-spacing:-0.17px">&gt; </span><span style="letter-spacing:0.06px">Body </span><span style="letter-spacing:0.08px">Content </span><span style="letter-spacing:-0.17px">&gt; </span><span style="letter-spacing:0.16px">Duplicate </span><span style="letter-spacing:0.06px">Body </span>Sets</div>
<div class="c rf"><u><span style="letter-spacing:-0.11px">htt</span>ps:<span style="letter-spacing:-0.22px">//s</span><span style="letter-spacing:0.33px">upp</span>ort<span style="letter-spacing:0.11px">.go</span><span style="letter-spacing:0.33px">ogl</span>e.com/<span style="letter-spacing:0.33px">web</span><span style="letter-spacing:0.11px">mas</span>ters/a<span style="letter-spacing:0.22px">nsw</span>er/<span style="letter-spacing:0.33px">139</span><span style="letter-spacing:0.33px">066</span></u></div>
</div>
<div class="r" style="top:550px">
<div class="rh">20</div>
<div class="c" style="left:77px;width:446px"><span style="letter-spacing:0.13px">URLs </span><span style="letter-spacing:0.07px">work </span><span style="letter-spacing:0.07px">with </span><span style="letter-spacing:0.06px">both </span><span style="letter-spacing:-0.18px">HTTP </span>or <span style="letter-spacing:-0.11px">HTTPS.</span></div>
<div class="c gpass" style="left:547px"><span style="letter-spacing:0.08px">Pass</span></div>
<div class="c" style="left:600px"><span style="letter-spacing:0.06px">Issue</span></div>
<div class="c wh"><span style="letter-spacing:0.13px">Screaming </span>Frog <span style="letter-spacing:0.27px">Crawl</span></div>
<div class="c st"><span style="letter-spacing:0.05px">URL </span><span style="letter-spacing:0.20px">field</span></div>
<div class="c rf"><u><span style="letter-spacing:-0.11px">htt</span>ps:<span style="letter-spacing:-0.22px">//s</span><span style="letter-spacing:0.33px">upp</span>ort<span style="letter-spacing:0.11px">.go</span><span style="letter-spacing:0.33px">ogl</span>e.com/<span style="letter-spacing:0.33px">web</span><span style="letter-spacing:0.11px">mas</span>ters/a<span style="letter-spacing:0.22px">nsw</span>er/<span style="letter-spacing:0.33px">607</span><span style="letter-spacing:0.33px">354</span><span style="letter-spacing:0.33px">3</span></u></div>
</div>
<!-- selection -->
<div id="selL" style="left:523px;top:146px;width:1px;height:22px"></div><div class="abs" style="left:523px;top:172px;width:1px;height:388px;background:#188038"></div>
<div id="selR" style="left:821px;top:146px;width:1px;height:22px"></div><div class="abs" style="left:821px;top:172px;width:1px;height:388px;background:#188038"></div>
<div id="selT" style="left:523px;top:146px;width:299px;height:1px"></div>
<div class="abs" style="left:36px;top:146px;width:19px;height:22px;border:2px solid #1a73e8"></div>
<!-- scrollbars -->
<div class="abs" style="left:1288px;top:172px;width:12px;height:397px;background:#fff;border-left:1px solid #dadce0"></div>
<div class="abs" style="left:1288px;top:123px;width:12px;height:45px;background:#f8f9fa;border-left:1px solid #c0c0c0"></div>
<div class="abs" style="left:1291px;top:173px;width:8px;height:87px;border-radius:4px;background:#dadce0"></div>
<div class="abs" style="left:0;top:560px;width:1300px;height:9px;background:#fff;border-top:1px solid #dadce0"></div>
<div class="abs" style="left:37px;top:562px;width:982px;height:12px;border-radius:4px;background:#dadce0"></div>
<div class="abs" style="left:1289px;top:528px;width:11px;height:1px;background:#dadce0"></div>
<div class="abs" style="left:1289px;top:544px;width:11px;height:1px;background:#dadce0"></div>
<div class="abs" style="left:1256px;top:561px;width:1px;height:8px;background:#dadce0"></div>
<div class="abs" style="left:1272px;top:561px;width:1px;height:8px;background:#dadce0"></div>
<div class="abs" style="left:1288px;top:561px;width:1px;height:8px;background:#dadce0"></div>
<svg class="abs" style="left:1256px;top:528px" width="44" height="41" viewBox="1256 528 44 41"><g fill="#8a8a8a"><path d="M1292 537.500L1294.500 534.500L1297 537.500Z"/><path d="M1292 551L1297 551L1294.500 554Z"/><path d="M1265 563.500L1265 568.500L1262 566Z"/><path d="M1279.500 563.500L1279.500 568.500L1282.500 566Z"/></g></svg>
</div></body></html>
